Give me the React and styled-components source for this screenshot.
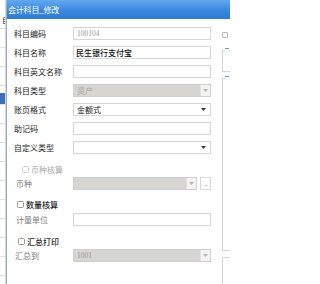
import React from 'react';
import styled, { createGlobalStyle } from 'styled-components';

const Global = createGlobalStyle`
  html, body { margin: 0; padding: 0; background: #fff; }
  body {
    width: 230px; height: 284px; overflow: hidden;
    font-family: "Noto Sans CJK SC", "Noto Sans", sans-serif;
  }
  #root { width: 230px; height: 284px; }
`;

const Screen = styled.div`
  display: flex;
  width: 230px;
  height: 284px;
  overflow: hidden;
  background: #fff;
`;

/* table of the window behind the dialog */
const BackTable = styled.div`
  flex: none;
  width: 6px;
  display: flex;
  flex-direction: column;
  border-right: 1px solid #c9d6e6;
  box-sizing: border-box;
  overflow: hidden;
`;

const BackHead = styled.div`
  height: 29px;
  flex: none;
  box-sizing: border-box;
  border-bottom: 1px solid #d8dde4;
  padding: 17px 0 0 2px;
  font-size: 7px;
  line-height: 7px;
  color: #222;
  overflow: hidden;
`;

const BackRow = styled.div`
  height: 19px;
  flex: none;
  box-sizing: border-box;
  border-bottom: 1px solid #dfe3e8;
  display: flex;
  align-items: flex-end;
`;

const SelBar = styled.div`
  width: 100%;
  height: 11px;
  background: #3f6fb8;
`;

const Dialog = styled.div`
  flex: 1;
  min-width: 0;
  display: flex;
  flex-direction: column;
  border-left: 1px solid #a3aebb;
`;

const TitleBar = styled.div`
  height: 19px;
  flex: none;
  display: flex;
  align-items: center;
  padding-left: 1px;
  background: linear-gradient(#62a9ef, #3a88df 55%, #2f7bd4);
  color: #fff;
  font-size: 8px;
  letter-spacing: -0.2px;
  white-space: nowrap;
`;

const Body = styled.div`
  flex: 1;
  display: flex;
  padding-top: 8px;
`;

const FormCol = styled.div`
  flex: none;
  width: 204px;
  display: flex;
  flex-direction: column;
  padding-left: 7px;
  box-sizing: border-box;
`;

const Row = styled.div`
  display: grid;
  grid-template-columns: 59px 138px;
  align-items: center;
  height: 13px;
  margin-top: ${p => p.$top || 0}px;
`;

const Label = styled.div`
  font-size: 8px;
  line-height: 13px;
  color: ${p => (p.$muted ? '#7a7a7a' : '#1e1e1e')};
  white-space: nowrap;
  padding-left: ${p => p.$indent || 0}px;
`;

const FieldGroup = styled.div`
  display: flex;
  gap: 3px;
  height: 13px;
`;

const Field = styled.div`
  flex: 1;
  height: 13px;
  box-sizing: border-box;
  border: 1px solid ${p => (p.$disabled ? '#cfcfcf' : '#d6d6d6')};
  background: ${p => (p.$disabled ? '#d7d5d1' : '#fff')};
  display: flex;
  align-items: center;
  font-size: ${p => (p.$num ? 7.5 : 8)}px;
  color: ${p => p.$color || '#111'};
  white-space: nowrap;
  overflow: hidden;
`;

const Value = styled.span`
  flex: 1;
  padding-left: ${p => p.$pad ?? 3}px;
  font-weight: ${p => (p.$bold ? 500 : 400)};
  font-family: ${p => (p.$num ? '"Liberation Serif", serif' : 'inherit')};
`;

const ArrowCell = styled.div`
  flex: none;
  width: 9px;
  height: 100%;
  display: flex;
  align-items: center;
  justify-content: center;
  background: ${p => (p.$disabled ? '#f3f3f3' : 'transparent')};
  border-left: ${p => (p.$disabled ? '1px solid #e2e2e2' : 'none')};
  margin-right: ${p => (p.$disabled ? 0 : 2)}px;
`;

const DotsButton = styled.div`
  flex: none;
  width: 11px;
  height: 13px;
  box-sizing: border-box;
  border: 1px solid #d8d8d8;
  background: #fff;
  font-size: 6px;
  line-height: 12px;
  color: #999;
  text-align: center;
  letter-spacing: -0.5px;
`;

const CheckRow = styled.div`
  display: flex;
  align-items: center;
  gap: 2px;
  height: 10px;
  margin-top: ${p => p.$top || 0}px;
  padding-left: ${p => p.$indent || 0}px;
  font-size: 8px;
  color: ${p => (p.$disabled ? '#a8a8a8' : '#1e1e1e')};
  font-weight: ${p => (p.$disabled ? 400 : 500)};
  white-space: nowrap;
`;

const Box = styled.span`
  flex: none;
  width: 7px;
  height: 7px;
  box-sizing: border-box;
  border: 1px solid ${p => (p.$disabled ? '#d0d0d0' : '#9a9a9a')};
  border-radius: 1.5px;
  background: #fff;
`;

const RightCol = styled.div`
  flex: 1;
  display: flex;
  flex-direction: column;
  padding: 5px 0 0 11px;
  min-width: 0;
`;

const SmallBox = styled.span`
  width: 6px;
  height: 6px;
  box-sizing: border-box;
  border: 1px solid #b8b8b8;
  border-radius: 1px;
  background: #fff;
`;

const Group = styled.div`
  position: relative;
  height: ${p => p.$h}px;
  margin-top: ${p => p.$top}px;
  box-sizing: border-box;
  border: 1px solid #cfd6de;
  border-right: none;
  width: 40px;
`;

const Legend = styled.span`
  position: absolute;
  top: -3px;
  left: 2px;
  width: 4px;
  height: 4px;
  background: #fff;
  border-top: 1px solid #6a9ad6;
`;

const Arrow = ({ color }) => (
  <svg width="5" height="3" viewBox="0 0 5 3">
    <path d="M0 0h5L2.5 3z" fill={color} />
  </svg>
);

const Select = ({ value, disabled, color, num }) => (
  <Field $disabled={disabled} $color={color} $num={num}>
    <Value $num={num}>{value}</Value>
    <ArrowCell $disabled={disabled}>
      <Arrow color={disabled ? '#b5b5b5' : '#333'} />
    </ArrowCell>
  </Field>
);

export default function App() {
  const backRows = Array.from({ length: 14 });
  return (
    <>
      <Global />
      <Screen>
        <BackTable>
          <BackHead>目</BackHead>
          {backRows.map((_, i) => (
            <BackRow key={i}>{i === 3 ? <SelBar /> : null}</BackRow>
          ))}
        </BackTable>
        <Dialog>
          <TitleBar>会计科目_修改</TitleBar>
          <Body>
            <FormCol>
              <Row>
                <Label>科目编码</Label>
                <Field $color="#9a9a9a" $num>
                  <Value $num>100104</Value>
                </Field>
              </Row>
              <Row $top={6}>
                <Label>科目名称</Label>
                <Field>
                  <Value $bold $pad={2}>民生银行支付宝</Value>
                </Field>
              </Row>
              <Row $top={6}>
                <Label>科目英文名称</Label>
                <Field />
              </Row>
              <Row $top={6}>
                <Label>科目类型</Label>
                <Select value="资产" disabled color="#a5a5a5" />
              </Row>
              <Row $top={6}>
                <Label>账页格式</Label>
                <Select value="金额式" color="#222" />
              </Row>
              <Row $top={6}>
                <Label>助记码</Label>
                <Field />
              </Row>
              <Row $top={6}>
                <Label>自定义类型</Label>
                <Select value="" />
              </Row>
              <CheckRow $top={10} $indent={8} $disabled>
                <Box $disabled />
                币种核算
              </CheckRow>
              <Row $top={3}>
                <Label $muted $indent={2}>币种</Label>
                <FieldGroup>
                  <Select value="" disabled />
                  <DotsButton>...</DotsButton>
                </FieldGroup>
              </Row>
              <CheckRow $top={9} $indent={3}>
                <Box />
                数量核算
              </CheckRow>
              <Row $top={4}>
                <Label $muted $indent={2}>计量单位</Label>
                <Field />
              </Row>
              <CheckRow $top={10} $indent={4}>
                <Box />
                汇总打印
              </CheckRow>
              <Row $top={3}>
                <Label $muted $indent={1}>汇总到</Label>
                <Select value="1001" disabled color="#9a9a9a" num />
              </Row>
            </FormCol>
            <RightCol>
              <SmallBox />
              <Group $top={12} $h={22}>
                <Legend />
              </Group>
              <Group $top={6} $h={173}>
                <Legend />
              </Group>
              <Group $top={6} $h={40} />
            </RightCol>
          </Body>
        </Dialog>
      </Screen>
    </>
  );
}
